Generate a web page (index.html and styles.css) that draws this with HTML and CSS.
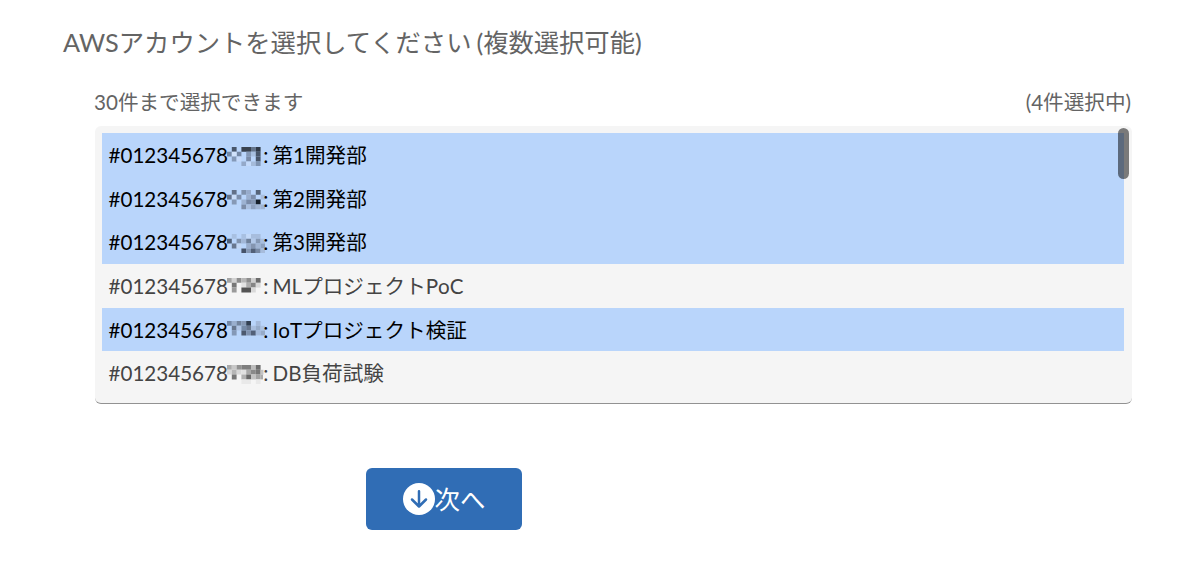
FILE: index.html
```
<!doctype html>
<html lang="ja">
<head>
    <meta charset="UTF-8">
    <title>AWSアカウントの選択</title>
    <link rel="stylesheet" href="styles.css">
</head>
<body>

    <form class="account_form">
        <h1 class="title">AWSアカウントを選択してください (複数選択可能)</h1>

        <div class="field">
            <div class="field_head">
                <span>30件まで選択できます</span>
                <span>(4件選択中)</span>
            </div>

            <div class="listbox">
                <ul class="options">
                    <li class="option selected">#012345678<svg class="mask" viewBox="0 0 8 4">
                        <path fill="#48566a" d="M1 0h1v1h-1z"/><path fill="#39424f" d="M3 0h2v1h-2z"/><path fill="#64748b" d="M5 0h1v1h-1z"/><path fill="#2f3947" d="M6 0h1v1h-1z"/>
                        <path fill="#7488a5" d="M0 1h1v1h-1zM2 1h1v1h-1z"/><path fill="#d0e2fb" d="M1 1h1v1h-1z"/><path fill="#8599b7" d="M4 1h1v1h-1z"/><path fill="#a7bfdf" d="M5 1h1v1h-1z"/><path fill="#48566a" d="M6 1h1v1h-1z"/>
                        <path fill="#8499b8" d="M1 2h1v1h-1z"/><path fill="#c5dafa" d="M2 2h1v1h-1z"/><path fill="#7b8ca8" d="M4 2h1v1h-1z"/><path fill="#475468" d="M6 2h1v1h-1z"/>
                        <path fill="#94a9c9" d="M3 3h1v1h-1z"/><path fill="#c4dafa" d="M4 3h1v1h-1z"/><path fill="#a4bad9" d="M5 3h1v1h-1z"/><path fill="#7f94b2" d="M6 3h1v1h-1z"/>
                    </svg>: 第1開発部</li>
                    <li class="option selected">#012345678<svg class="mask" viewBox="0 0 8 4">
                        <path fill="#627088" d="M1 0h1v1h-1z"/><path fill="#8092ad" d="M3 0h1v1h-1z"/><path fill="#97abcb" d="M4 0h1v1h-1z"/><path fill="#566479" d="M6 0h1v1h-1z"/>
                        <path fill="#65738a" d="M0 1h1v1h-1z"/><path fill="#c9dcf8" d="M1 1h1v1h-1z"/><path fill="#7d8eaa" d="M2 1h1v1h-1zM5 1h1v1h-1z"/><path fill="#9bafce" d="M4 1h1v1h-1z"/><path fill="#a8bedf" d="M7 1h1v1h-1z"/>
                        <path fill="#8699b6" d="M1 2h1v1h-1z"/><path fill="#9db2d1" d="M3 2h1v1h-1z"/><path fill="#7b8ca8" d="M4 2h1v1h-1z"/><path fill="#8597b3" d="M5 2h1v1h-1z"/><path fill="#17202b" d="M6 2h1v1h-1z"/>
                        <path fill="#7d8da7" d="M3 3h1v1h-1z"/><path fill="#abc0df" d="M4 3h1v1h-1z"/><path fill="#8fa2c0" d="M5 3h1v1h-1z"/><path fill="#a1b5d3" d="M6 3h1v1h-1z"/><path fill="#9eb4d4" d="M7 3h1v1h-1z"/>
                    </svg>: 第2開発部</li>
                    <li class="option selected">#012345678<svg class="mask" viewBox="0 0 8 4">
                        <path fill="#a8c0e1" d="M1 0h1v1h-1zM3 0h1v1h-1z"/><path fill="#c3d9f8" d="M4 0h1v1h-1z"/><path fill="#a7bddd" d="M5 0h2v1h-2z"/>
                        <path fill="#506078" d="M0 1h1v1h-1z"/><path fill="#8294af" d="M2 1h1v1h-1z"/><path fill="#a2b7d7" d="M3 1h1v1h-1z"/><path fill="#6f819b" d="M4 1h1v1h-1z"/><path fill="#b2c8e8" d="M5 1h1v1h-1z"/><path fill="#8699b5" d="M6 1h1v1h-1z"/><path fill="#a8bedf" d="M7 1h1v1h-1z"/>
                        <path fill="#68778f" d="M1 2h1v1h-1z"/><path fill="#c2d7f5" d="M2 2h1v1h-1z"/><path fill="#9aaecd" d="M4 2h1v1h-1z"/><path fill="#8495b0" d="M5 2h1v1h-1z"/><path fill="#a0b4d2" d="M6 2h1v1h-1z"/><path fill="#8ca1c0" d="M7 2h1v1h-1z"/>
                        <path fill="#46536a" d="M3 3h1v1h-1z"/><path fill="#8698b4" d="M4 3h1v1h-1z"/><path fill="#526078" d="M5 3h1v1h-1z"/><path fill="#7889a4" d="M6 3h1v1h-1z"/><path fill="#a7bcdc" d="M7 3h1v1h-1z"/>
                    </svg>: 第3開発部</li>
                    <li class="option">#012345678<svg class="mask" viewBox="0 0 8 4">
                        <path fill="#a5a5a5" d="M0 0h1v1h-1z"/><path fill="#d2d2d2" d="M1 0h1v1h-1z"/><path fill="#8d8d8d" d="M2 0h1v1h-1zM4 0h1v1h-1z"/><path fill="#b6b6b6" d="M3 0h1v1h-1z"/><path fill="#cfcfcf" d="M5 0h1v1h-1z"/><path fill="#6b6b6b" d="M6 0h1v1h-1z"/>
                        <path fill="#777" d="M1 1h1v1h-1z"/><path fill="#e3e3e3" d="M3 1h1v1h-1z"/><path fill="#adadad" d="M4 1h1v1h-1z"/><path fill="#858585" d="M5 1h1v1h-1z"/><path fill="#d8d8d8" d="M6 1h1v1h-1z"/>
                        <path fill="#9a9a9a" d="M1 2h1v1h-1z"/><path fill="#545454" d="M3 2h2v1h-2z"/><path fill="#d9d9d9" d="M5 2h1v1h-1z"/>
                    </svg>: MLプロジェクトPoC</li>
                    <li class="option selected">#012345678<svg class="mask" viewBox="0 0 8 4">
                        <path fill="#7488a6" d="M0 0h1v1h-1z"/><path fill="#9aafce" d="M1 0h1v1h-1z"/><path fill="#73849d" d="M2 0h1v1h-1z"/><path fill="#8698b4" d="M3 0h1v1h-1z"/><path fill="#334052" d="M4 0h1v1h-1z"/><path fill="#a5badb" d="M6 0h1v1h-1z"/>
                        <path fill="#68778e" d="M1 1h1v1h-1z"/><path fill="#b0c5e5" d="M2 1h1v1h-1z"/><path fill="#758aa7" d="M3 1h1v1h-1z"/><path fill="#68778f" d="M4 1h1v1h-1z"/><path fill="#a8bddd" d="M5 1h1v1h-1z"/><path fill="#96abc9" d="M6 1h1v1h-1z"/><path fill="#acc3e4" d="M7 1h1v1h-1z"/>
                        <path fill="#8498b6" d="M1 2h1v1h-1z"/><path fill="#4d5a6f" d="M3 2h1v1h-1z"/><path fill="#8092ae" d="M4 2h1v1h-1z"/><path fill="#536078" d="M5 2h1v1h-1z"/><path fill="#a5badb" d="M6 2h1v1h-1z"/><path fill="#96abc9" d="M7 2h1v1h-1z"/>
                    </svg>: IoTプロジェクト検証</li>
                    <li class="option">#012345678<svg class="mask" viewBox="0 0 8 4">
                        <path fill="#aaa" d="M0 0h1v1h-1z"/><path fill="#c8c8c8" d="M1 0h1v1h-1z"/><path fill="#929292" d="M2 0h1v1h-1z"/><path fill="#7e7e7e" d="M3 0h2v1h-2z"/><path fill="#bcbcbc" d="M5 0h1v1h-1z"/><path fill="#6c6c6c" d="M6 0h1v1h-1z"/>
                        <path fill="#d8d8d8" d="M0 1h1v1h-1zM2 1h1v1h-1z"/><path fill="#b6b6b6" d="M1 1h1v1h-1z"/><path fill="#e0e0e0" d="M3 1h1v1h-1z"/><path fill="#a8a8a8" d="M4 1h1v1h-1z"/><path fill="#898989" d="M5 1h1v1h-1z"/><path fill="#777" d="M6 1h1v1h-1z"/><path fill="#c4c4c4" d="M7 1h.6v1h-.6z"/>
                        <path fill="#777" d="M1 2h1v1h-1z"/><path fill="#b0b0b0" d="M3 2h1v1h-1z"/><path fill="#686868" d="M4 2h1v1h-1z"/><path fill="#c2c2c2" d="M5 2h1v1h-1z"/><path fill="#a2a2a2" d="M6 2h1v1h-1z"/><path fill="#aaa" d="M7 2h.5v1h-.5z"/>
                        <path fill="#e9e9e9" d="M3 3h2v1h-2zM6 3h1v1h-1z"/>
                    </svg>: DB負荷試験</li>
                </ul>
                <div class="scrollbar"></div>
            </div>
        </div>

        <button type="button" class="next">
            <svg class="next_icon" viewBox="0 0 32 32">
                <circle cx="16" cy="16" r="16" fill="#fff"/>
                <path d="M16 8.2v15M9 16.5l7 7 7-7" fill="none" stroke="#306db5" stroke-width="2.5" stroke-linecap="round" stroke-linejoin="round"/>
            </svg>
            <span class="next_label">次へ</span>
        </button>
    </form>

</body>
</html>
```
FILE: styles.css
```
body {
    margin: 0;
    background: #fff;
    color: #646464;
    font-family: Lato, "Noto Sans CJK JP", sans-serif;
    font-size: 20.6px;
}
.account_form {
    padding: 24px 68px 0 63px;
}
.title {
    margin: 0;
    font-size: 25.3px;
    font-weight: normal;
    line-height: 36px;
    word-spacing: -1.5px;
    white-space: nowrap;
}
.field {
    margin: 27px 0 0 32px;
}
.field_head {
    display: flex;
    justify-content: space-between;
    height: 39px;
    margin: 0 1px 0 -1px;
    line-height: 30px;
}
.listbox {
    position: relative;
    box-sizing: border-box;
    height: 278px;
    padding: 7px 8px 0 7px;
    overflow: hidden;
    background: #f5f5f5;
    border-bottom: 1px solid #929292;
    border-radius: 6px;
}
.options {
    margin: 0;
    padding: 0;
    list-style: none;
    font-kerning: none;
}
.option {
    height: 43.65px;
    padding-left: 6.5px;
    color: #444;
    line-height: 44.8px;
    word-spacing: -1.3px;
    white-space: nowrap;
}
.selected {
    background: #b9d5fb;
    color: #000;
}
.mask {
    width: 38.4px;
    height: 19.2px;
    margin: 0 -2px 0 -1px;
    vertical-align: -3px;
}
.scrollbar {
    position: absolute;
    top: 2px;
    right: 3px;
    width: 11px;
    height: 51px;
    background: rgba(0, 0, 0, 0.5);
    border-radius: 6px;
}
.next {
    display: flex;
    align-items: center;
    justify-content: center;
    width: 156px;
    height: 62px;
    margin: 64px 0 0 303px;
    padding: 0;
    border: 0;
    border-radius: 6px;
    background: #306db5;
    color: #fff;
    font-family: inherit;
    font-size: 25.4px;
}
.next_icon {
    width: 32px;
    height: 32px;
}
.next_label {
    padding-bottom: 3px;
}
```
